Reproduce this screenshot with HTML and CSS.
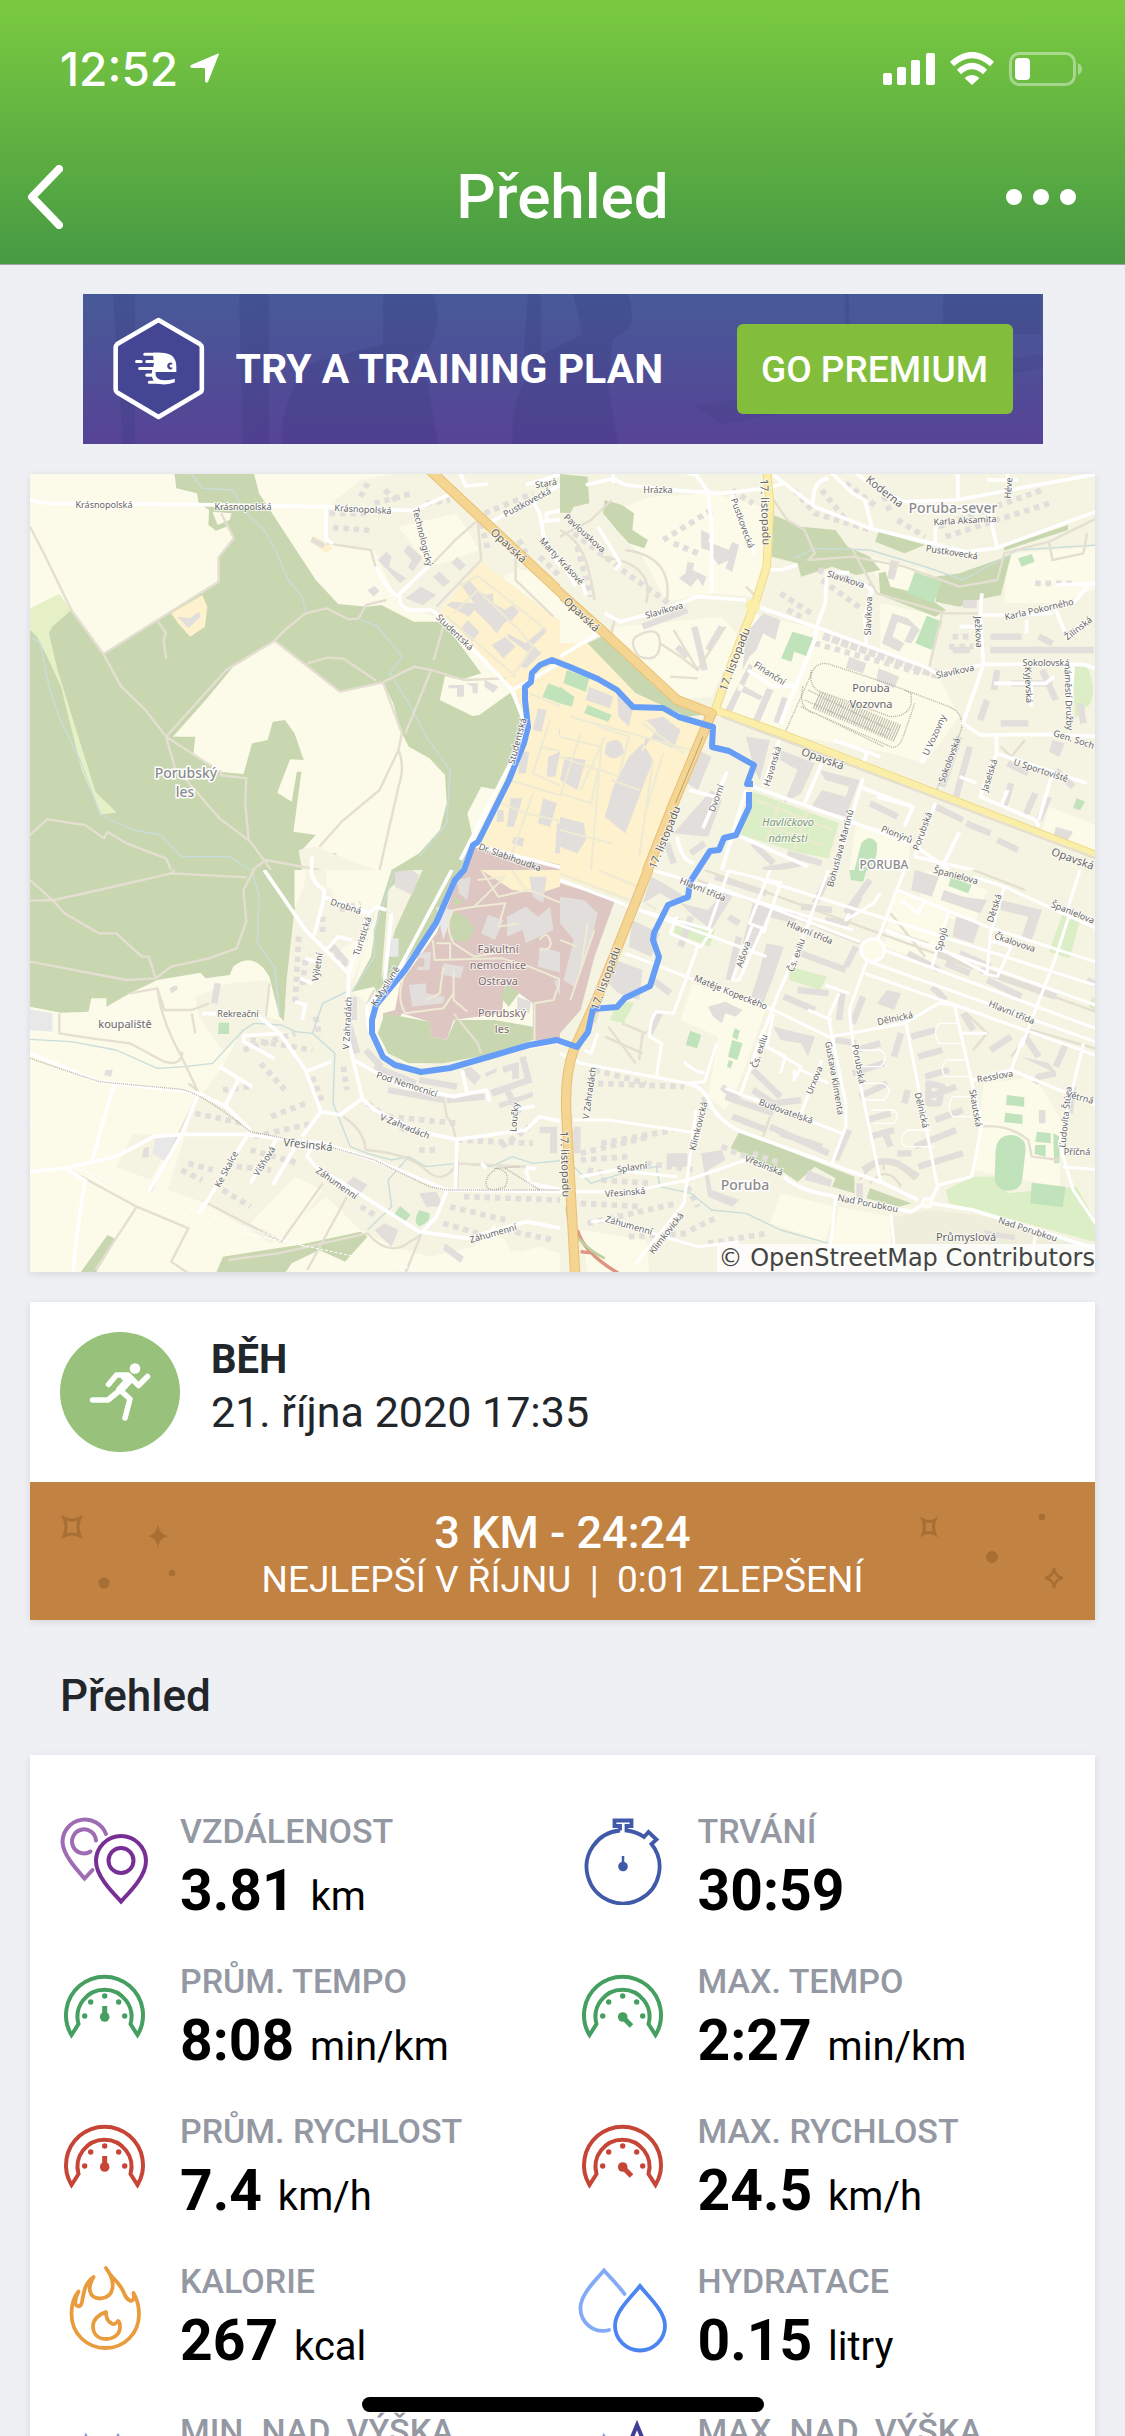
FILE: index.html
```html
<!DOCTYPE html>
<html lang="cs">

<head>
  <meta charset="UTF-8">
  <meta name="viewport" content="width=device-width, initial-scale=1">
  <title>Přehled</title>
  <link rel="stylesheet" href="styles.css">
</head>

<body>
  <!-- shared icons -->
  <svg class="defs" aria-hidden="true">
    <symbol id="gauge" viewBox="0 0 90 90">
      <path d="M11.500 70A38.500 38.500 0 1 1 77.500 70L70.500 59A27 27 0 1 0 18.500 59Z" fill="none" stroke="currentColor" stroke-width="4" />
      <g fill="currentColor">
        <circle cx="24.700" cy="51" r="2.700" />
        <circle cx="30.700" cy="37" r="2.700" />
        <circle cx="44.700" cy="31" r="2.700" />
        <circle cx="58.700" cy="37" r="2.700" />
        <circle cx="64.700" cy="51" r="2.700" />
        <circle cx="44.700" cy="52" r="4.800" />
      </g>
    </symbol>
  </svg>

  <div class="app">
    <header class="header">
      <div class="status-bar">
        <span class="time">12:52</span>
        <svg class="location" viewBox="0 0 32 32"><path d="M31 1L20 29Q18 31 17 28V16Q17 15 16 15H4Q1 14 3 12L29 1Q31 0 31 1Z" fill="#fff" /></svg>
        <svg class="signal" viewBox="0 0 52 34" fill="#fff">
          <rect x="0" y="21" width="9" height="12" rx="2" />
          <rect x="14" y="15" width="9" height="18" rx="2" />
          <rect x="28" y="8" width="9" height="25" rx="2" />
          <rect x="43" y="1" width="9" height="32" rx="2" />
        </svg>
        <svg class="wifi" viewBox="0 0 46 34" fill="none" stroke="#fff" stroke-width="6">
          <path d="M3 12Q23 -6 43 12" />
          <path d="M10 20Q23 8 36 20" />
          <path d="M23 33L15.500 26Q23 20 30.500 26Z" fill="#fff" stroke="none" />
        </svg>
        <svg class="battery" viewBox="0 0 74 36">
          <rect x="1.500" y="2.500" width="64" height="31" rx="9" fill="none" stroke="#fff" stroke-opacity=".4" stroke-width="3" />
          <rect x="6" y="7" width="15" height="22" rx="4" fill="#fff" />
          <path d="M69 12Q73 14 73 18T69 24Z" fill="#fff" fill-opacity=".4" />
        </svg>
      </div>
      <nav class="nav">
        <button class="nav-button" type="button" aria-label="Zpět">
          <svg viewBox="0 0 36 64"><path d="M32 4L5 32L32 60" fill="none" stroke="#fff" stroke-width="8" stroke-linecap="round" stroke-linejoin="round" /></svg>
        </button>
        <h1>Přehled</h1>
        <button class="nav-button more" type="button" aria-label="Více">
          <svg viewBox="0 0 72 18" fill="#fff"><circle cx="9" cy="9" r="8" /><circle cx="36" cy="9" r="8" /><circle cx="63" cy="9" r="8" /></svg>
        </button>
      </nav>
    </header>

    <main class="content">
      <section class="banner">
        <svg class="banner-art" viewBox="0 0 960 150" preserveAspectRatio="xMidYMid slice" aria-hidden="true">
          <g fill="#2f3575" opacity=".2">
            <path d="M300 0H350Q358 20 352 40L345 56L330 62L345 90L355 150H200Q195 110 225 70L300 50Z" />
            <path d="M490 0H545Q552 20 546 34L530 45L525 90L535 150H430Q425 100 460 60L500 40Z" />
            <path d="M30 0H52V150H40ZM156 0H186V150H160ZM445 0H458V70H440ZM762 0H766V70H762ZM860 0H958V40H860Z" />
            <path d="M610 112L960 60V74L640 130Z" opacity=".6" />
          </g>
        </svg>
        <svg class="banner-logo" viewBox="14 8 90 102">
          <path d="M58.500 11L99 34.500Q101 36 101 38V79Q101 81 99 82L58.500 106L18 82Q16.500 81 16.500 79V38Q16.500 36 18 34.500Z" fill="#444593" stroke="#fff" stroke-width="4.500" stroke-linejoin="round" />
          <g stroke="#fff" stroke-width="3" stroke-linecap="round">
            <path d="M45 44.500H60M37 51.700H41.500M47 51.700H58M40 58.500H58M47 65H52M49.500 72H60" />
          </g>
          <path d="M53 43H61Q76 43 76 57V62H55.500Q55 70 64 70Q70 70 74.500 68.500V72Q69 74.500 62 74Q51 74 52 62L54 54Z" fill="#fff" />
          <path d="M72 53A3.400 3.400 0 1 0 72 59V57A1.500 1.500 0 1 1 72 55Z" fill="#444593" />
        </svg>
        <span class="banner-text">TRY A TRAINING PLAN</span>
        <button class="premium" type="button">GO PREMIUM</button>
      </section>

      <section class="map card">
        <svg class="map-canvas" viewBox="30 474 1065 798" preserveAspectRatio="xMidYMid slice">
          <rect x="30" y="470" width="1070" height="810" fill="#fcfae8" />

          <!-- north-west tile -->
          <svg x="30" y="470" width="540" height="400" viewBox="0 0 1568 1200" preserveAspectRatio="none">
            <path class="forest" d="M418 0L425 55L485 70L490 100L520 120L518 165L540 182L575 168L592 205L548 262L550 330L213 552L120 420L0 480V1200H1250L1285 1100L1270 1030L1310 950L1360 960L1400 870L1432 750L1395 668L1305 735L1285 738L1190 690L1205 618L1250 630L1310 610L1200 455L1115 455L1020 405L980 410L895 402L830 330L760 220L665 70L648 0Z" />
            <path class="field" d="M710 515L800 585L900 665L1025 637L1055 700L1075 780L1100 830L1160 865L1205 915L1210 1000L1190 1080L1130 1150L1050 1200H820L785 1145L830 1095L765 1085L788 905H775L760 995L718 968L755 868L795 870L768 790L740 750L705 755L690 810L645 820L620 912L550 905L475 850L480 800H415L510 690L590 590ZM530 125L585 130L580 150L545 165Z" />
            <path class="forest" d="M858 1150H890L880 1195H855ZM840 575L910 566L1010 635L900 665L800 585Z" />
            <path class="meadow" d="M0 415L85 372L120 420L65 470L55 490L80 600L190 965L252 1028L205 1033L150 900L90 650L50 560L20 500L0 480Z" />
            <path class="town" d="M960 30L1120 0H1568V390L1470 300L1410 300L1180 440L1070 400L1000 240L862 215V110ZM780 1140L830 1130L1000 1200H790Z" />
            <path class="field" d="M1070 170L1240 130L1305 240L1230 270L1160 290ZM1410 290L1568 400V480L1410 340Z" />
            <path class="campus" d="M1310 275L1510 430L1568 470V1200L1290 1130L1440 770L1400 650L1180 440ZM410 430L500 375L515 410L508 470L465 500L430 460ZM825 195L880 235L862 250L812 215Z" />
            <path class="hospital" d="M1290 1130L1568 1190V1200H1255Z" />
            <path class="water" d="M460 0L500 55L590 60L620 120L680 180L710 235L750 330L790 380L800 425M960 450L1010 470L1080 560L1045 610L1100 700L1150 800L1220 900L1210 1060L1130 1160M0 500L30 520L55 650L85 740L145 870L205 1035L300 1080L380 1095L440 1160L580 1160L640 1200" />
            <path class="pitch" d="M1505 640L1568 665V712L1488 680ZM1555 605H1568V648L1548 640Z" />
            <path class="building" d="M1010 270L1035 245L1050 262L1042 290L1092 325L1075 340ZM1098 225L1140 262L1112 305L1098 292L1108 270L1085 245ZM980 360L1000 348L1015 362L998 380ZM820 200L858 222L850 235L815 215ZM428 440L465 445L490 425L495 440L460 475Z" />
            <path class="building" d="M1090 385L1135 350L1180 375L1140 405ZM1170 320L1190 305L1220 335L1200 350ZM1225 280L1240 260L1265 285L1250 303Z" />
            <path class="building" d="M1255 350L1275 330L1300 360L1325 375L1345 370L1345 400L1380 420L1400 405L1420 425L1400 450L1380 455L1355 490L1330 460L1290 420L1275 440L1210 405L1225 395L1290 400ZM1340 525L1380 500L1410 530L1375 565ZM1385 490L1440 520L1490 475L1500 485L1460 525L1485 550L1440 595L1425 590L1450 550L1390 505ZM1250 480L1270 450L1305 485L1285 515Z" />
            <path class="building" d="M1215 645H1260V680H1240V655H1215ZM1265 640H1300V670H1285V650ZM1320 630L1360 650L1345 668L1320 650Z" />
            <path class="building" d="M1475 715L1500 720L1485 785L1460 780ZM1425 845H1450L1440 910H1418ZM1505 860L1540 845L1525 920H1500ZM1540 760H1558V795H1535ZM1395 985H1430L1405 1070H1385ZM1490 985L1530 1000L1510 1070L1475 1060ZM1405 1100L1435 1105L1430 1130L1400 1120ZM1550 940H1568V1010H1545ZM1530 1060H1568V1150H1525ZM1358 1020H1375V1055H1355Z" />
            <path class="house" d="M870 130L990 130M880 172L990 182M1000 100L1110 70M1030 60L1070 95M1150 100L1220 90M1320 130L1460 70M1310 160L1330 240M960 80L980 40M1420 210L1440 250M1480 260L1550 330" />
            <path class="path" d="M0 170L45 260L120 420L213 552L265 650L335 720L395 800L560 910M213 552L548 335V262L592 205L555 130M372 455L395 490L388 510L395 565M395 800L570 600L710 512L740 480L800 430L860 415L925 448L955 445L975 405L1035 390M710 512L900 665L1025 637L1115 590L1165 600L1260 630L1380 625M805 580L865 563L910 566L1005 632M1025 637L1080 790L1070 840L1015 960L905 1055L840 1130M1165 600L1090 790M1070 840Q1090 890 1070 950L1015 1200M1200 470L1172 570M395 800L420 890L550 1045L640 1115L700 1200M550 915L628 925L625 1000L635 1110M0 1095L50 1048L160 1065L215 1105L225 1085L280 1120L395 1165L410 1200M645 1200L685 1170L840 1200M862 220L990 240L1003 290M1295 155L1235 210L1165 285M1300 150L1310 270L1180 410M1410 250V330L1520 440" />
            <path class="path light" d="M1240 350L1300 318L1500 480M1230 430L1300 360L1420 480L1460 530L1400 620M1210 440L1300 520L1410 620M1450 670L1568 720M1510 750L1460 910L1568 960M1390 930L1568 985M1480 830L1568 850M1460 970L1400 1150M1370 1000L1440 1030L1568 1060" />
            <path class="road" d="M0 90L50 100L490 104L860 110L1110 122L1222 72M860 112V208L880 222M1005 290Q1030 350 1068 380M1160 285L1075 370Q1065 415 1110 420L1165 420Q1200 440 1400 660L1440 770L1400 870L1250 1170M1400 660L1455 630L1568 560M1340 155L1568 30M1460 90L1480 130L1495 220L1568 330M1250 12L1265 48L1330 42M1485 155L1568 145M1500 150V130L1540 122M1580 0L1440 45M818 1160V1200M1290 1125L1568 1200" />
            <path class="primary-case" d="M1150 -10L1580 405" />
            <path class="primary" d="M1150 -10L1580 405" />
          </svg>

          <!-- north-east tile -->
          <svg x="560" y="470" width="540" height="400" viewBox="0 0 1568 1200" preserveAspectRatio="none">
            <rect class="town" width="1568" height="1200" />
            <path class="field" d="M190 110L260 80L440 70L590 110L600 300L560 380L440 370L310 395L240 260L180 200ZM0 390L110 490L0 560ZM160 470L470 440L520 500L440 680L330 690L150 490ZM560 430L720 470L1100 620L1160 740L1060 880L960 850L640 790L460 740ZM900 260L1060 300L1110 420L960 390L920 320ZM1300 250L1568 230V350L1450 400L1290 400ZM930 400L1110 440L1070 590L930 540ZM860 1060L1020 1100L1010 1200H840ZM1420 1010L1568 1070V1150L1400 1080Z" />
            <path class="campus" d="M0 520L80 520L380 760L430 780L245 1200H0Z" />
            <path class="forest" d="M0 12L80 20L85 100L40 110L30 130L0 128ZM130 90L180 105L215 130L210 180L255 210L245 235L200 220L165 180L125 130ZM620 135L700 170L800 180L835 230L900 260L930 300L860 315L790 290L700 320L690 280L615 260ZM925 185L1060 225L1000 250L915 215ZM1290 230L1475 165V180L1290 242ZM945 305L960 350L1060 375L1120 420L1090 440L930 375L925 310ZM1060 325L1160 310L1310 255L1280 375L1220 388L1160 410L1090 395L1100 340ZM80 520L130 495L410 735L370 740L220 670Z" />
            <path class="pitch" d="M1030 305L1108 335L1085 400L1008 370ZM1330 265L1370 252L1378 275L1340 290ZM1065 437L1110 455L1080 540L1032 520ZM675 485L735 503L715 558L680 545L672 575L642 565ZM20 600L85 625L75 665L10 640ZM0 650L42 680L35 710L0 700ZM80 705L150 735L140 755L70 730ZM875 1120Q900 1090 920 1120Q925 1160 900 1200H855ZM1500 985L1525 995L1510 1020L1490 1015Z" />
            <path class="park" d="M560 965L810 1060L780 1165L700 1150L525 1095ZM1490 590H1530Q1560 650 1540 700L1495 745Z" />
            <path class="path light" d="M570 990L790 1080M590 1060L770 1130M640 990L600 1110M720 1020L680 1140" />
            <path class="building" d="M410 180L440 195L430 215L490 240L500 215L520 225L500 305L480 295L490 270L460 285L430 240L410 235ZM370 275L390 280L385 300L425 320L415 350L400 325L380 350L345 325L365 310ZM590 430L640 450L625 510L590 490L570 540L550 560L530 600L540 490ZM550 580L480 720L500 725L560 590ZM600 655L620 660L580 755L560 750ZM645 680L660 685L635 760L620 755ZM520 640L590 680L580 690L515 660ZM840 560L890 580L880 610L830 595ZM925 595L985 620L970 655L918 632ZM965 430L1010 445L1045 480L1020 520L1000 515L1020 470L980 455L965 500L1000 520L985 545L935 520ZM960 270L985 275L970 330L950 325Z" />
            <path class="building" d="M85 650L155 680L145 715L75 690ZM135 820Q180 790 185 850Q150 880 130 850ZM165 660L215 700L200 770L170 740ZM250 750L300 740L350 780L330 835L250 800L235 850L280 780ZM240 820L270 870L190 1090L130 1040L155 950L200 860ZM15 860L75 870L50 960L0 930ZM0 1040L70 1060L75 1110L50 1150L0 1130ZM380 830L440 860L400 960L370 940L395 880ZM440 960L470 990L430 1100L330 1090ZM540 800L610 810L580 930L565 900ZM640 840L740 880L700 970L650 1000L690 900L640 870ZM755 900L870 930L830 1040L730 1010L760 960L830 980L840 950L770 930ZM1440 1070L1490 1085L1470 1120L1430 1110ZM1430 810L1465 820L1450 860L1420 845ZM1170 390H1210V415H1170Z" />
            <path class="house" d="M680 60L740 130L900 180M760 60L830 150M980 150L1060 200M1100 170L1400 60M1120 200L1420 100M830 40L920 110M930 50L960 130M640 370L730 430M660 420L700 440M750 300L900 350M760 330L880 420M740 520L1050 610M500 60L560 100M330 220L400 250M180 300L330 410M1140 500L1200 500M1130 530L1200 530M40 190L170 290M50 230L90 380M300 210L440 120M1380 340H1490" />
            <path class="block" d="M1250 500H1340M1250 540H1550M1390 500L1430 520M1140 540H1190M240 470L370 420M340 530L370 560M390 470L420 600M430 540L470 470M1270 600L1260 660M1240 690L1220 750M1310 640H1430M1280 760H1360M1400 600L1440 690M1160 800L1110 950M1190 830L1150 980M1310 940L1290 1010M1380 970L1350 1040M1180 1060L1250 1090M1270 1110L1330 1140M1090 1010L1170 1050M560 1120L620 1180M660 1150L760 1180M590 1200L700 1180M1440 900L1490 950M1420 980L1390 1050M1510 700L1520 760M1300 880L1360 910M310 1120L330 1180M380 1150L420 1120M900 1000L980 1040" />
            <path class="terrace" d="M765 495L1100 615" />
            <path class="water" d="M680 265L740 235L900 240L1060 290L1170 330L1330 240L1560 225" />
            <path class="path light" d="M0 860L110 900L90 1000L0 970M110 770L200 800L170 920L90 890M240 760L360 850M130 800L60 960M30 740L380 840M300 850L250 1020M150 930L230 960M0 800L120 830L90 1200M0 1080L150 1120M60 790L0 980M270 870L230 1160" />
            <path class="path" d="M620 90L660 150L710 180L740 250L720 270L850 260L1000 290L1160 350L1270 330L1290 250L1420 215L1568 140M850 240L920 370L1120 430H1220M1420 215L1430 270L1520 250L1530 190M150 90L90 150L0 200M0 180Q60 210 80 290T100 390M190 240Q330 260 310 395M120 260Q280 280 250 400M220 500Q290 460 290 520T230 560Q200 520 220 500M330 480L400 600L480 470M290 520L350 560L400 600M320 620L400 625M150 490L160 440M1110 430L1070 600M540 350L570 380M1280 830L1310 860L1350 810" />
            <path class="rail" d="M650 795L735 600Q750 575 780 582L950 640L1130 710Q1175 730 1165 780L1090 970M730 600Q720 660 770 670L960 740Q1010 740 1020 700V670L1000 660M705 650Q690 720 740 730L960 830Q985 840 1000 790L1030 700M720 660L960 780M710 690L950 800M700 710L940 830" />
            <path class="tracks" d="M745 690L980 790" />
            <path class="road" d="M75 45L155 25L190 45L350 62L470 70L600 55L650 40M155 0V40M340 0L395 15L430 65L440 170V370M620 15L740 110L900 175L1180 245L1265 235L1568 120M735 110Q730 30 780 25M780 0L850 70L885 90L905 170M850 0Q900 50 1000 95L1150 90L1568 10M1155 0V90M1245 120L1270 235M1090 170V220M1240 30H1330M1300 0V60M500 75L510 130L565 250M600 298L640 300L690 285M110 170L175 280L160 300M20 300L45 350M65 340L75 375M130 430L175 455L300 420L400 380L540 390M575 410L740 470L1060 590L1110 620M775 310L770 400L745 470L740 510L640 760M880 340L905 360L885 440L890 530M0 560L120 485M770 308H840M545 600L620 650L690 645M1110 610L1200 590L1230 583H1520L1568 600M1225 370L1220 440L1230 583L1170 760L1220 795L1430 793L1568 800M1215 435H1310L1430 430M1355 450V490M1440 420L1470 500L1530 450M1160 470H1210M1540 340L1490 400M1260 640H1410L1435 620M1440 345L1568 340M1368 640V710M1267 795L1268 850L1530 940M1268 850L1220 980L1380 1050L1390 1070M1430 910L1390 1050M1210 940L1160 920M1110 750L1050 880M1300 960L1280 1010M795 810L930 860M890 850L880 885M640 800L590 950M560 950L1020 1120L1130 1200M540 960L470 1200M760 880L710 1000M880 925L800 1200M870 950L1025 1010L1000 1070M920 980L1025 1010M1090 1000L1030 1160M1030 1160L1200 1200M375 960L450 980M485 905L415 1075M340 1100Q350 1170 390 1180M525 1100L720 1190M1160 1085L1110 1190M1490 590L1480 720" />
            <path class="secondary-case" d="M600 0L610 100L600 290L570 390L520 520L450 720L640 790L1568 1160" />
            <path class="secondary" d="M600 0L610 100L600 290L570 390L520 520L450 720L640 790L1568 1160" />
            <circle class="secondary" cx="560" cy="408" r="11" />
            <path class="path" d="M470 740L1568 1170" />
            <path class="primary-case" d="M-10 360L120 480L340 690L440 730L330 1000L250 1210" />
            <path class="primary" d="M-10 360L120 480L340 690L440 730L330 1000L250 1210" />
            <path class="median" d="M415 800L335 1000" />
          </svg>

          <!-- south-west tile -->
          <svg x="30" y="870" width="540" height="410" viewBox="0 0 1568 1230" preserveAspectRatio="none">
            <path class="forest" d="M0 0H768V110L795 125L780 230L745 360L738 455L725 440L695 320Q650 240 590 290L580 315L510 325L495 308L370 330L290 370L222 410V385H178L170 425L90 428L0 410ZM1050 0H1250L1170 170L1010 380L1000 350L935 365L990 260L1010 130ZM225 1095L250 1108L190 1210H145ZM560 1160L780 1125L960 1085L980 1100L915 1175L840 1140L760 1180L740 1210H540Z" />
            <path class="town" d="M768 120L790 60L810 0L860 50L1005 120L935 365L980 400L985 500L1100 590L1568 520V1160L1480 1130L1400 1150L1350 1060L1290 1130L1160 1160L1060 1130L960 1080L860 980L700 1120L510 1000L400 960L480 700L560 590L620 470L690 440L738 455L745 330ZM800 0H860V70L800 100ZM480 380L580 340L690 330L680 440L560 540L490 440ZM300 790L420 800L350 930L250 890ZM1040 60L1100 0H1140L1060 180L1020 330Z" />
            <path class="field" d="M868 0H1005L1010 90L970 140L880 80ZM770 920L850 960L740 1110L640 1060ZM1290 1130L1568 1160V1210H1200ZM900 240L990 180L935 340Z" />
            <path class="hospital" d="M1255 0L1568 0V520L1460 510V400L1380 340L1370 430L1230 450L1210 510L1165 500L1160 455L1080 430L1050 495L1025 480V430L1060 420L1075 340L1180 190Z" />
            <path class="forest" d="M1215 120Q1270 130 1290 180L1270 215L1225 210ZM1230 80L1260 95L1230 110ZM1385 340L1420 370L1390 410L1365 380ZM1030 430L1160 455L1165 500L1210 510L1235 450L1350 450L1460 470V510L1350 550L1200 580L1100 580L1040 550L1010 490Z" />
            <path class="campus" d="M1310 0H1568V40L1480 70L1400 60Z" />
            <path class="pitch" d="M548 458H578V492H546ZM1075 1008L1105 1035L1085 1060L1052 1040ZM1130 1020L1160 1030Q1165 1055 1130 1070Q1110 1055 1130 1020Z" />
            <path class="building" d="M1240 30L1280 20L1270 90L1245 70ZM1060 5L1110 0L1130 15L1110 75L1060 50ZM1330 135L1375 150L1350 210L1310 190ZM1385 140L1440 110L1475 140L1510 110L1520 180L1440 220L1430 180L1385 200ZM1480 230L1550 250L1545 310L1475 290ZM1200 280L1260 290L1250 325L1200 315ZM1100 345L1150 340V370L1205 380L1200 400L1110 410ZM1120 250L1165 245L1160 300H1125V290H1145V265H1120ZM1415 380L1455 395L1450 430L1415 420ZM1450 20H1500L1490 100L1460 80ZM1335 660L1450 620L1460 635L1345 680ZM1360 700L1460 665V680L1365 715ZM1280 590L1310 620L1290 645L1250 600ZM1320 610L1355 595V605L1325 620ZM1372 590L1420 575V625L1400 628V600L1375 610ZM920 940L940 920L980 945L960 970ZM1130 970L1180 965L1200 1010L1150 1010ZM1000 1080L1030 1060L1070 1080L1050 1130ZM220 600L240 600L235 620L215 615ZM405 355L425 345L430 358L410 370ZM1205 1120L1260 1160L1250 1178L1200 1140ZM330 835L345 830V860L325 865ZM1480 770H1530V850H1510V790H1480Z" />
            <path class="lot" d="M365 800H430L400 880L355 850ZM0 418L65 430V485L0 480ZM1180 110L1230 120L1200 210ZM1040 205H1070V260H1040Z" />
            <path class="house" d="M780 200L770 400M800 270L790 360M850 140V200M870 230L920 290M900 120L960 100M620 540L770 490M640 510L820 540M670 580L740 660M560 660L640 650M480 730L620 760M700 740L800 700M650 800L820 760M640 840L780 880M600 890L700 900M560 960L640 1010M440 900L500 930M460 880L530 900M830 440L840 500M820 620L850 700M980 700L1100 790M1040 740L1240 760M1130 840H1180M1240 810L1460 820M1260 980L1540 990M1220 1010L1380 1050M1200 1060L1300 1090M1380 1080L1520 1110M960 1010L1010 1040M1370 830L1450 770M910 590L920 660" />
            <path class="block" d="M940 380V450M925 460L950 550M975 540L1020 590M1000 590L1120 640M1040 660L1200 690M1130 630L1240 650M1210 690L1320 680M1380 650L1420 730M1430 560L1450 640M545 340L535 400M870 220L920 280M1530 330L1550 380" />
            <path class="water" d="M0 508L120 515L250 540L370 595L450 590L530 580L620 480L650 460L730 465L770 485L820 490L885 550L880 700L930 830L980 850L1050 870L1100 860L1150 890L1240 880L1340 890L1400 860L1460 880L1560 870M645 0L665 80L660 220L710 290L725 440M820 490L850 400L920 365M1100 860L1040 930L1050 1010L980 1080M1060 0L1000 180L1000 260L935 365" />
            <path class="path" d="M0 30L65 90L100 130L200 190H250L325 260H345L365 325L410 290L520 265L600 235L628 155L620 60L650 0M0 92L70 90L200 60L410 10L420 0M410 10L630 22M0 275L280 330L365 325M290 370L370 355L390 420H470L520 400M370 355Q380 450 440 560L490 670M85 430V490L180 505L290 520L390 575Q440 590 442 545M470 430L480 490M695 340L685 440M490 670L350 965M490 665L460 640M245 640L180 870M310 1010L190 1200M105 895L310 1010L460 1075L410 1175L460 1210M515 1000L730 1115L850 940M920 980L805 1200M575 1170L720 1150L980 1090Q1030 1150 1080 1130L1135 1095L1090 1210M1200 680L1210 740Q1250 780 1240 960M910 740Q970 780 975 840Q1100 850 1150 900T1240 880L1440 890M1230 430L1300 520L1310 550M980 400L1000 360" />
            <path class="path light" d="M1300 30L1380 20L1290 110L1230 120Q1200 160 1230 220L1290 260L1400 240M1290 110L1380 100L1360 170L1420 160M1170 210L1175 270L1370 265L1450 290L1568 340M1180 220H1220V270M1230 300V390L1270 425M1090 310Q1060 380 1090 430L1200 415L1230 370M1200 290L1190 370L1150 390M1310 0L1360 80L1450 60L1568 110M1400 0L1440 60M1465 510V400L1520 390L1568 250M1480 210Q1500 180 1510 210T1480 240" />
            <path class="power" d="M0 770L230 960L580 1080L900 1150L1180 1210M120 890L500 1030L800 1130" />
            <path class="road" d="M680 0L800 180L925 310L922 500L965 685L1000 720L1130 785L1240 808L1440 780L1480 740L1568 760M815 0Q820 40 855 60L850 100L825 195M850 80L985 130L1005 110L1035 120M985 130L925 310M860 240L895 200L935 210M1050 130L1030 330M500 430L540 432M660 435L725 490L800 600L845 725L900 735L965 685M730 490L620 497V515L710 565M800 605L875 575M845 725L790 800M550 590L645 650M605 630L565 710M940 570L1080 650L1230 680L1325 660L1335 695M1255 600L1268 665M1225 0L1070 300L980 410Q970 510 1060 580M0 905L100 895L250 860L360 800L440 793H620L850 820L1000 870L1210 960L1568 965M0 550L200 635L420 660L490 670L570 710L640 780M245 640L180 870M160 930L135 1100L125 1210M105 895L165 935M490 670L440 793L345 965M640 780L510 1000L490 1030M720 800L640 940M770 830L705 945M820 820L805 860L830 890L970 980L1130 1085L1270 1105L1440 1055L1545 1075M1210 965L1180 1040L1140 1085M1240 808L1235 960M1310 880L1325 895M1440 895H1470M1440 900L1450 940L1568 965M1400 720L1465 708M800 265L830 275M785 325L820 340M770 395L800 405L790 450" />
            <path class="rail" d="M0 565L200 635L440 658Q500 670 640 785L740 805L870 830L1000 870L1160 950L1210 960H1568M1350 900Q1320 920 1325 945T1380 950Q1400 900 1350 895L1425 890M1380 895L1480 960" />
          </svg>

          <!-- south-east tile -->
          <svg x="560" y="870" width="540" height="410" viewBox="0 0 1568 1230" preserveAspectRatio="none">
            <rect class="town" width="1568" height="1230" />
            <path class="campus" d="M0 0H260L190 90L0 20Z" />
            <path class="hospital" d="M0 40L160 90L100 260L60 420L0 490Z" />
            <path class="building" d="M0 80L70 90L110 130L90 210L40 350L10 330L40 210L0 160Z" />
            <path class="field" d="M385 340L600 410L520 640L480 720L430 680L460 500L350 450ZM970 60L1130 120L1080 280L940 230ZM1230 640L1380 620L1460 760L1450 950L1200 900ZM640 970L800 1010L770 1115L610 1060ZM810 1010L960 1040L975 1150L770 1200ZM60 1080L250 1110L260 1210H80ZM1060 0L1240 60L1200 170L1040 110Z" />
            <path class="industry" d="M970 1040L1080 1020L1240 1040L1568 1130V1210H970Z" />
            <path class="meadow-bright" d="M1120 960L1200 920L1260 920L1300 970L1500 950L1568 1080V1120L1320 1050L1130 1000ZM1460 130L1510 150L1480 265L1420 245ZM170 390L215 400L185 460L145 450ZM670 290L775 320L755 360L665 330ZM340 145L450 180L435 230L330 190ZM1545 380L1568 390V430L1535 410Z" />
            <path class="forest" d="M520 785L855 920V970L790 950L800 925L740 890L690 935L640 900L495 835ZM900 955L1020 1000L985 1010L890 985Z" />
            <path class="pitch" d="M1265 840Q1270 795 1310 795Q1355 800 1352 840L1342 930Q1335 965 1295 962Q1260 955 1262 920ZM1370 938L1468 950L1460 1012L1365 1000ZM1298 675L1348 682V710L1295 705ZM1293 728L1343 735V762L1290 757ZM1385 785L1425 790V820L1380 815ZM1380 825H1410V860L1378 852ZM1432 790L1452 800L1450 880H1435ZM378 482L410 495L398 535L365 525ZM500 510L530 520L515 570L488 560ZM508 475L522 482L515 510L500 500ZM490 570L503 575L495 595L485 590ZM1135 20L1195 45L1185 70L1128 48ZM840 0H890L880 35L845 30Z" />
            <path class="building" d="M265 20L300 40L380 90L340 100L290 70L240 100ZM350 100L430 120L480 60L500 80L440 180L390 140ZM210 150L290 190L265 260L200 230ZM430 410L480 395L530 420L510 440L480 430L470 460L445 440ZM560 100L690 130L680 160L600 140L560 240L530 220ZM600 220L650 230L620 320L590 400L555 380L580 300ZM310 850H370V890H310ZM410 850L470 840L480 870L430 900L440 960L520 990L500 1010L430 980ZM1030 0L1100 20L1080 80L1020 60ZM1115 60L1170 80L1240 90L1220 130L1105 90ZM1280 90L1400 120L1370 210L1340 200L1360 140L1280 120ZM1150 140L1220 160L1200 220L1140 200ZM160 270L240 300L230 390L170 370L140 340ZM620 470L740 500L720 560L700 520L640 510ZM1340 560L1440 610L1420 580ZM720 900L790 930L785 950L710 930ZM1230 1080L1320 1095V1110L1240 1100ZM950 360L990 370L970 420L920 400Z" />
            <path class="block" d="M480 680L620 730M500 740L600 780M610 770L780 850M640 790L760 830M560 600L640 680M560 660L620 700L700 690M650 380L740 420M690 360L780 370M700 250L830 300M820 370L810 450M880 380L850 460M770 150L830 160L870 80M740 100L780 20M900 30L830 130M470 650L520 690M860 540L930 520M850 610L940 580M870 680L950 640M890 750L960 730M900 800L970 780M1020 500L1090 480M1040 560L1110 540M1060 620L1130 600M1070 680L1150 650M1090 750L1170 720M1030 830L1150 780M1040 890L1170 850M1170 430L1200 480M1120 390L1080 350M1250 540L1310 500M1350 500L1390 560M1380 640L1390 620L1440 610M1220 300L1440 380M1240 330L1340 380M870 940L870 990M880 900Q930 860 980 880L1040 920M970 560L990 490M1000 700L1010 660M940 780L960 830M980 850H1020M1070 640L1110 650L1100 700H1070ZM790 120L700 110M800 510L860 520M840 780L800 870M1160 250L1250 290M1470 520L1440 590M1490 650L1480 730M1400 720V760M1530 330L1568 350M1010 250L1100 300M1120 280L1190 310M1090 250L1200 290M50 770V850M30 780V840M860 230L830 290M450 20L600 70M490 140L520 160M520 200L490 330M380 140L350 230M220 110L250 20M270 330L320 370M290 430L260 490" />
            <path class="house" d="M100 600L250 640M110 640L360 650M60 850L260 800M120 820L330 780M60 870L200 860M80 900L130 910M250 880L390 900M60 1000L240 1010M80 1060L340 1000M200 1100L380 1090M380 1080L460 1040M370 950L400 1010M120 930L260 940M430 1120L600 1090M560 850L640 880M470 830L540 860M420 680V720" />
            <path class="water" d="M40 890L90 940L180 910L280 890L290 950L380 970L440 1020L540 1030L640 1080L780 1120" />
            <path class="path light" d="M0 10L200 90M110 0L250 60M400 40L560 90M250 100L280 120M80 160L60 300M100 180L30 390M0 210L50 230" />
            <path class="path" d="M130 500L240 550M140 470L220 580M180 460L250 490M240 490L230 570M190 150L100 460M420 0L1568 430M400 30L870 220M960 130L1060 260M950 180L1070 220M610 740L590 800M1220 770Q1300 760 1360 810L1370 860L1450 870M1180 430L1240 490L1200 540M870 930Q940 830 1030 930M900 940Q950 880 990 950M940 900V870M960 1030L970 1180M1200 0L1350 60M1310 560L1370 480L1568 540" />
            <path class="road thin" d="M480 0L560 20L1568 350M270 0L850 180M430 40L870 215M0 30L230 120L600 260M610 0L550 160L600 180M560 160L500 330H520L590 170M640 40L590 190M600 30L645 40M720 160L780 0M730 140L630 380L525 670M230 120L440 180L410 230L320 190L340 140M490 0L430 180M400 230L330 430L280 425Q260 450 260 500L295 520L280 620M190 250L620 420L780 500L845 490L920 475M620 430L600 530L655 560L640 610M600 530L700 590L680 630L680 600M700 600L780 640M810 370L780 440L790 500L830 700V770L790 880M720 420L790 450M770 345L840 370M1000 0L930 190L885 290L840 420L855 560L930 930M885 310L1230 435M885 270L1568 520M940 240L1568 480M945 180L1568 410M980 60L1240 170L1568 280M990 90L1040 130L1060 90M1130 120L1080 290M1130 250L1240 310L1250 190L1290 50L1568 180M1245 210L1310 230L1270 320L1230 310M1480 130L1440 260L1340 530M1510 0L1470 130M1290 50L1200 20M1000 460L920 475M1000 460L1100 400L1145 405L1225 770L1195 920L1100 945M1005 460L1095 945M1145 405L1568 560M1165 490L1240 490M1200 630L1310 600L1568 710M1310 600L1345 500M1520 520L1450 820L1490 960L1568 1080M1460 890L1568 900M480 655L820 790M525 670L590 480M700 730L760 570M0 550L60 580L370 640L420 635L455 520M360 575Q380 600 420 610M70 540L90 550L110 490M40 750H140L340 780L400 790M60 920L160 900L340 920M0 965H200L370 930L540 870M395 720L360 1000L220 1180M90 1055L140 1050L270 1090L400 1130L520 1115M800 980L790 1090L770 1200M960 1030L975 1180M1380 1100L1370 1160M840 130L830 150L910 100L930 70" />
            <path class="road" d="M370 640Q420 650 440 710Q480 770 540 790L940 940L1040 990M650 920Q690 960 780 975L1020 1025L1080 985L1100 945M1080 1000L1200 1020L1568 1140" />
            <path class="estate" d="M860 540H930Q960 560 930 590H870M870 640H940Q970 660 940 690H880M900 720H970Q990 740 970 760H910M1160 460H1100Q1080 490 1100 520H1170M1180 570H1120Q1100 600 1120 620H1190M1190 680H1140Q1120 710 1140 740H1210M1080 780H1010Q980 800 1000 830H1090" />
            <circle class="roundabout" cx="908" cy="240" r="34" />
            <circle class="roundabout" cx="1066" cy="998" r="13" />
            <path d="M50 1080Q70 1150 170 1210M60 1145L100 1150" fill="none" stroke="#dd9480" stroke-width="10" />
            <path d="M20 1010Q20 1060 50 1100T130 1165" fill="none" stroke="#bcd0a0" stroke-width="8" />
            <path class="primary-case" d="M260 -10L110 380L40 540Q10 620 20 760L45 1230" />
            <path class="primary" d="M260 -10L110 380L40 540Q10 620 20 760L45 1230" />
          </svg>

          <!-- run track -->
          <path class="track" d="M753 784L747 784L754 765L729 751L712 747L713 727L679 717L663 708L633 707L617 690L598 679L570 667L552 660L540 665L532 673L531 682L525 687L525 700L528 727L524 743L509 780L478 842L473 845L464 870L455 880L436 923L405 970L376 1005L372 1020L372 1033L383 1057L395 1065L421 1072L450 1068L495 1055L529 1045L557 1040L577 1047L588 1032L593 1009L617 1007L625 998L650 986L659 957L653 940L654 933L668 905L688 897L690 882L710 851L719 850L724 838L736 835L749 807L749 792" />

          <g class="street">
            <text x="104" y="504">Krásnopolská</text>
            <text x="243" y="506">Krásnopolská</text>
            <text x="363" y="509" transform="rotate(3 363 509)">Krásnopolská</text>
            <text x="423" y="537" transform="rotate(76 423 537)">Technologický</text>
            <text x="546" y="483" transform="rotate(-10 546 483)">Stará</text>
            <text x="527" y="502" transform="rotate(-28 527 502)">Pustkovecká</text>
            <text x="562" y="561" transform="rotate(47 562 561)">Marty Krásové</text>
            <text x="455" y="632" transform="rotate(44 455 632)">Studentská</text>
            <text x="517" y="741" transform="rotate(-75 517 741)">Studentská</text>
            <text x="510" y="857" transform="rotate(20 510 857)">Dr. Slabihoudka</text>
            <text x="658" y="489">Hrázka</text>
            <text x="743" y="523" transform="rotate(70 743 523)">Pustkovecká</text>
            <text x="585" y="533" transform="rotate(42 585 533)">Pavlouskova</text>
            <text x="1008" y="488" transform="rotate(-85 1008 488)">Héve</text>
            <text x="965" y="520" transform="rotate(-3 965 520)">Karla Aksamita</text>
            <text x="952" y="552" transform="rotate(9 952 552)">Pustkovecká</text>
            <text x="846" y="579" transform="rotate(18 846 579)">Slavíkova</text>
            <text x="868" y="616" transform="rotate(-88 868 616)">Slavíkova</text>
            <text x="664" y="610" transform="rotate(-16 664 610)">Slavíkova</text>
            <text x="955" y="671" transform="rotate(-12 955 671)">Slavíkova</text>
            <text x="770" y="673" transform="rotate(33 770 673)">Finanční</text>
            <text x="1039" y="609" transform="rotate(-13 1039 609)">Karla Pokorného</text>
            <text x="1078" y="628" transform="rotate(-38 1078 628)">Žilinská</text>
            <text x="979" y="632" transform="rotate(87 979 632)">Ježkova</text>
            <text x="1046" y="662">Sokolovská</text>
            <text x="1029" y="685" transform="rotate(88 1029 685)">Kyjevská</text>
            <text x="1069" y="697" transform="rotate(88 1069 697)">náměstí Družby</text>
            <text x="1074" y="739" transform="rotate(18 1074 739)">Gen. Soch</text>
            <text x="1041" y="770" transform="rotate(18 1041 770)">U Sportoviště</text>
            <text x="934" y="735" transform="rotate(-65 934 735)">U Vozovny</text>
            <text x="949" y="760" transform="rotate(-70 949 760)">Sokolovská</text>
            <text x="989" y="775" transform="rotate(-72 989 775)">Jaselská</text>
            <text x="772" y="766" transform="rotate(-73 772 766)">Havanská</text>
            <text x="716" y="798" transform="rotate(-70 716 798)">Dvorní</text>
            <text x="840" y="848" transform="rotate(-75 840 848)">Bohuslava Martinů</text>
            <text x="897" y="834" transform="rotate(22 897 834)">Pionýrů</text>
            <text x="922" y="831" transform="rotate(-70 922 831)">Porubská</text>
            <text x="956" y="875" transform="rotate(15 956 875)">Španielova</text>
            <text x="346" y="906" transform="rotate(18 346 906)">Drobná</text>
            <text x="362" y="936" transform="rotate(-72 362 936)">Turistická</text>
            <text x="317" y="967" transform="rotate(-80 317 967)">Výletní</text>
            <text x="385" y="986" transform="rotate(-57 385 986)">K Myslivně</text>
            <text x="347" y="1023" transform="rotate(-87 347 1023)">V Zahradách</text>
            <text x="238" y="1013">Rekreační</text>
            <text x="407" y="1084" transform="rotate(18 407 1084)">Pod Nemocnicí</text>
            <text x="405" y="1126" transform="rotate(22 405 1126)">V Zahradách</text>
            <text x="514" y="1117" transform="rotate(-85 514 1117)">Loučky</text>
            <text x="226" y="1169" transform="rotate(-62 226 1169)">Ke Skalce</text>
            <text x="264" y="1161" transform="rotate(-58 264 1161)">Višňová</text>
            <text x="337" y="1183" transform="rotate(35 337 1183)">Záhumenní</text>
            <text x="493" y="1233" transform="rotate(-16 493 1233)">Záhumenní</text>
            <text x="703" y="889" transform="rotate(22 703 889)">Hlavní třída</text>
            <text x="810" y="932" transform="rotate(22 810 932)">Hlavní třída</text>
            <text x="1012" y="1012" transform="rotate(22 1012 1012)">Hlavní třída</text>
            <text x="743" y="954" transform="rotate(-72 743 954)">Alšova</text>
            <text x="796" y="955" transform="rotate(-70 796 955)">Čs. exilu</text>
            <text x="759" y="1051" transform="rotate(-72 759 1051)">Čs. exilu</text>
            <text x="731" y="992" transform="rotate(22 731 992)">Matěje Kopeckého</text>
            <text x="941" y="939" transform="rotate(-75 941 939)">Spojů</text>
            <text x="994" y="908" transform="rotate(-72 994 908)">Dětská</text>
            <text x="1015" y="942" transform="rotate(19 1015 942)">Čkalovova</text>
            <text x="1073" y="912" transform="rotate(22 1073 912)">Španielova</text>
            <text x="895" y="1018" transform="rotate(-12 895 1018)">Dělnická</text>
            <text x="922" y="1110" transform="rotate(77 922 1110)">Dělnická</text>
            <text x="859" y="1064" transform="rotate(80 859 1064)">Porubská</text>
            <text x="835" y="1078" transform="rotate(80 835 1078)">Gustava Klimenta</text>
            <text x="814" y="1080" transform="rotate(-68 814 1080)">Urxova</text>
            <text x="995" y="1076" transform="rotate(-10 995 1076)">Resslova</text>
            <text x="976" y="1108" transform="rotate(80 976 1108)">Skautská</text>
            <text x="1065" y="1117" transform="rotate(-84 1065 1117)">Ľudovíta Štúra</text>
            <text x="1080" y="1097" transform="rotate(15 1080 1097)">Větrná</text>
            <text x="1077" y="1151">Příčná</text>
            <text x="786" y="1111" transform="rotate(20 786 1111)">Budovatelská</text>
            <text x="589" y="1093" transform="rotate(-82 589 1093)">V Zahradách</text>
            <text x="698" y="1126" transform="rotate(-76 698 1126)">Klimkovická</text>
            <text x="632" y="1167" transform="rotate(-8 632 1167)">Splavní</text>
            <text x="625" y="1192" transform="rotate(-5 625 1192)">Vřesinská</text>
            <text x="764" y="1165" transform="rotate(22 764 1165)">Vřesinská</text>
            <text x="868" y="1203" transform="rotate(11 868 1203)">Nad Porubkou</text>
            <text x="1028" y="1229" transform="rotate(18 1028 1229)">Nad Porubkou</text>
            <text x="629" y="1225" transform="rotate(16 629 1225)">Záhumenní</text>
            <text x="666" y="1233" transform="rotate(-52 666 1233)">Klimkovická</text>
          </g>
          <g class="street large">
            <text x="509" y="545" transform="rotate(43 509 545)">Opavská</text>
            <text x="582" y="614" transform="rotate(43 582 614)">Opavská</text>
            <text x="823" y="758" transform="rotate(20 823 758)">Opavská</text>
            <text x="1073" y="858" transform="rotate(20 1073 858)">Opavská</text>
            <text x="766" y="512" transform="rotate(88 766 512)">17. listopadu</text>
            <text x="734" y="659" transform="rotate(-69 734 659)">17. listopadu</text>
            <text x="664" y="837" transform="rotate(-68 664 837)">17. listopadu</text>
            <text x="605" y="978" transform="rotate(-70 605 978)">17. listopadu</text>
            <text x="566" y="1164" transform="rotate(88 566 1164)">17. listopadu</text>
            <text x="885" y="491" transform="rotate(38 885 491)">Koderna</text>
            <text x="308" y="1144" transform="rotate(6 308 1144)">Vřesinská</text>
            <text x="871" y="687">Poruba</text>
            <text x="871" y="703">Vozovna</text>
            <text x="125" y="1023">koupaliště</text>
            <text x="966" y="1236">Průmyslová</text>
          </g>
          <g class="street large hospital-label">
            <text x="498" y="948">Fakultní</text>
            <text x="498" y="964">nemocnice</text>
            <text x="498" y="980">Ostrava</text>
            <text x="502" y="1012">Porubský</text>
            <text x="502" y="1028">les</text>
          </g>
          <g class="street large park-label">
            <text x="788" y="821">Havlíčkovo</text>
            <text x="788" y="837">náměstí</text>
          </g>
          <g class="district">
            <text x="186" y="772">Porubský</text>
            <text x="185" y="791">les</text>
            <text x="953" y="507">Poruba-sever</text>
            <text x="884" y="864" class="small">PORUBA</text>
            <text x="745" y="1184">Poruba</text>
          </g>
        </svg>
        <p class="attribution">© OpenStreetMap Contributors</p>
      </section>

      <section class="card">
        <div class="workout">
          <svg class="sport" viewBox="0 0 120 120">
            <circle cx="60" cy="60" r="60" fill="#98c27c" />
            <g fill="none" stroke="#fff" stroke-width="5.500" stroke-linecap="round" stroke-linejoin="round">
              <circle cx="75" cy="36.500" r="5.300" fill="#fff" stroke="none" />
              <path d="M48.500 52.500L56.500 43H68L78.500 53.500L87.500 44.500" />
              <path d="M59 59L48 68H32.500M60 58L70 67L65 86" />
              <path d="M65 45L70 47L60 58" fill="#fff" stroke-width="8" />
            </g>
          </svg>
          <div class="workout-text">
            <h2 class="sport-name">BĚH</h2>
            <time class="date" datetime="2020-10-21T17:35">21. října 2020 17:35</time>
          </div>
        </div>
        <div class="record">
          <svg class="sparkles" viewBox="0 0 92 74" fill="#a76f34">
            <path d="M4 6Q12 10 20 6Q16 15 20 24Q12 20 4 24Q8 15 4 6Z" fill="none" stroke="#a76f34" stroke-width="3" />
            <path d="M98 12Q99 22 108 24Q99 26 98 36Q97 26 88 24Q97 22 98 12Z" />
            <circle cx="44" cy="71" r="5.500" /><circle cx="112" cy="61" r="3.300" />
          </svg>
          <div class="record-text">
            <strong>3 KM - 24:24</strong>
            <span>NEJLEPŠÍ V ŘÍJNU &nbsp;|&nbsp; 0:01 ZLEPŠENÍ</span>
          </div>
          <svg class="sparkles" viewBox="0 0 92 74" fill="#a76f34">
            <path d="M-50 8Q-44 11 -38 8Q-41 15 -38 22Q-44 19 -50 22Q-47 15 -50 8Z" fill="none" stroke="#a76f34" stroke-width="3" />
            <circle cx="69" cy="5" r="3.300" /><circle cx="19" cy="45" r="6" />
            <path d="M81 56Q82 65 90 66Q82 67 81 76Q80 67 72 66Q80 65 81 56Z" fill="none" stroke="#a76f34" stroke-width="2.500" />
          </svg>
        </div>
      </section>

      <h2 class="section-title">Přehled</h2>

      <dl class="stats card">
        <div class="stat">
          <svg viewBox="0 0 90 90" fill="none" stroke-width="4" stroke-linecap="round">
            <path d="M32.500 55L24.500 63.500C16 54 2.500 39 2.500 26.500A22.500 22.500 0 0 1 46 19M36 25.500A12 12 0 1 0 30.500 36.500" stroke="#9d6cb3" />
            <path d="M61 86.500C52 77 36 61 36 46A25 25 0 0 1 86 46C86 61 70 77 61 86.500Z" stroke="#782f95" />
            <circle cx="61" cy="45.500" r="12.500" stroke="#782f95" />
          </svg>
          <dt>VZDÁLENOST</dt>
          <dd><b>3.81</b> km</dd>
        </div>
        <div class="stat">
          <svg viewBox="0 0 90 90" fill="none" stroke="#4159a9" stroke-width="3.800">
            <path d="M42 15.500V11H36.500V5.500H53.500V11H48.500V15.500A36 36 0 0 1 66 22L70.500 17L78.500 24.500L73.500 29A36.500 36.500 0 1 1 42 15.500" />
            <path d="M45 41V51" stroke-width="2.500" />
            <circle cx="45" cy="51.500" r="4.800" fill="#4159a9" stroke="none" />
          </svg>
          <dt>TRVÁNÍ</dt>
          <dd><b>30:59</b></dd>
        </div>
        <div class="stat pace">
          <svg viewBox="0 0 90 90"><use href="#gauge" /><path d="M44.700 41V52" stroke="currentColor" stroke-width="5" /></svg>
          <dt>PRŮM. TEMPO</dt>
          <dd><b>8:08</b> min/km</dd>
        </div>
        <div class="stat pace">
          <svg viewBox="0 0 90 90"><use href="#gauge" /><path d="M44.700 52L53.500 61" stroke="currentColor" stroke-width="5" /></svg>
          <dt>MAX. TEMPO</dt>
          <dd><b>2:27</b> min/km</dd>
        </div>
        <div class="stat speed">
          <svg viewBox="0 0 90 90"><use href="#gauge" /><path d="M44.700 41V52" stroke="currentColor" stroke-width="5" /></svg>
          <dt>PRŮM. RYCHLOST</dt>
          <dd><b>7.4</b> km/h</dd>
        </div>
        <div class="stat speed">
          <svg viewBox="0 0 90 90"><use href="#gauge" /><path d="M44.700 52L53.500 61" stroke="currentColor" stroke-width="5" /></svg>
          <dt>MAX. RYCHLOST</dt>
          <dd><b>24.5</b> km/h</dd>
        </div>
        <div class="stat">
          <svg viewBox="0 0 90 90" fill="none" stroke="#e99c3d" stroke-width="3.800" stroke-linejoin="round">
            <path d="M46 3C57 18 54 33 40 33.500C29 33 27 23 33.500 12C24 19 24 28 22.500 34C22 40 20 42 17.500 41C14 40 15 33 18.500 26.500C12 34 11.500 44 11.500 49C11.500 69 27 83 45.500 83C64 83 79 69 79 49C79 40 77 34 73.500 28C75 35 72 37 69 35C64 32 65 27 60 21C56 15 50 11 46 3Z" />
            <path d="M46 47C37 50 33 56 33 61C33 69 38 74 46 74C54 74 60 69 60 62C60 59 60 57 58 56C56 59 53 60 51 58C47 56 46 52 46 47Z" />
          </svg>
          <dt>KALORIE</dt>
          <dd><b>267</b> kcal</dd>
        </div>
        <div class="stat">
          <svg viewBox="0 0 90 90" fill="none" stroke-width="3.800" stroke-linecap="round">
            <path d="M46.500 29C40 20 33 13 26 5.500C19 14 2.500 29 2.500 42.500A22.500 22.500 0 0 0 31 65" stroke="#82aaf7" />
            <path d="M62 21C55 30 37 46 37 60.500A25 25 0 0 0 87 60.500C87 46 69 30 62 21Z" stroke="#4d85f0" />
          </svg>
          <dt>HYDRATACE</dt>
          <dd><b>0.15</b> litry</dd>
        </div>
        <div class="stat">
          <svg viewBox="0 0 90 90" fill="none" stroke="#8f97d0" stroke-width="4">
            <path d="M4 76L26 22L42 48L58 22L84 76Z" />
          </svg>
          <dt>MIN. NAD. VÝŠKA</dt>
        </div>
        <div class="stat">
          <svg viewBox="0 0 90 90" fill="none" stroke-width="4">
            <path d="M4 76L26 22L36 36" stroke="#8f97d0" />
            <path d="M32 76L59 10L86 76Z" stroke="#403d97" />
          </svg>
          <dt>MAX. NAD. VÝŠKA</dt>
        </div>
      </dl>
    </main>
    <div class="home-indicator"></div>
  </div>
</body>

</html>
```
FILE: styles.css
```css
* {
  box-sizing: border-box;
}

body {
  margin: 0;
  background-color: #eff0f3;
  color: #22262a;
  font-family: Roboto, "Liberation Sans", sans-serif;
}

h1,
h2,
p,
dl,
dd {
  margin: 0;
}

button {
  border: 0;
  padding: 0;
  background: none;
  font-family: inherit;
  cursor: pointer;
}

.defs {
  display: none;
}

.app {
  position: relative;
  display: flex;
  flex-direction: column;
  height: 100vh;
  overflow: hidden;
}

/* header */
.header {
  flex: none;
  background: linear-gradient(#7aca40, #479a43);
  border-bottom: 1px solid #9fa5a0;
  color: #fff;
}

.status-bar {
  display: flex;
  align-items: center;
  height: 132px;
  padding: 6px 42px 0 60px;
}

.time {
  font-family: Inter, sans-serif;
  font-size: 46px;
  font-weight: 500;
}

.location {
  width: 32px;
  height: 32px;
  margin-left: 10px;
  margin-right: auto;
}

.signal {
  width: 52px;
  height: 34px;
}

.wifi {
  width: 46px;
  height: 34px;
  margin: 0 14px;
}

.battery {
  width: 74px;
  height: 36px;
}

.nav {
  display: grid;
  grid-template-columns: 100px 1fr 100px;
  align-items: center;
  height: 132px;
  padding: 0 48px 2px 27px;
}

.nav h1 {
  padding-left: 21px;
  font-size: 62px;
  font-weight: 500;
  line-height: 72px;
  text-align: center;
}

.nav-button {
  display: flex;
}

.nav-button svg {
  width: 36px;
  height: 64px;
}

.more {
  justify-content: flex-end;
}

.more svg {
  width: 72px;
  height: 18px;
}

/* page */
.content {
  flex: 1;
  min-height: 0;
  padding: 29px 30px 0;
  overflow-y: auto;
  scrollbar-width: none;
}

.card {
  background-color: #fff;
  box-shadow: 0 2px 8px rgba(0, 0, 0, 0.1);
}

/* banner */
.banner {
  position: relative;
  display: flex;
  align-items: center;
  max-width: 960px;
  height: 150px;
  margin: 0 auto 30px;
  padding: 0 30px;
  background: linear-gradient(#475a98, #574396);
}

.banner-art {
  position: absolute;
  inset: 0;
  width: 100%;
  height: 100%;
}

.banner-logo {
  position: relative;
  width: 92px;
  height: 104px;
}

.banner-text {
  position: relative;
  margin-left: 31px;
  color: #fff;
  font-size: 41px;
  font-weight: 700;
}

.premium {
  position: relative;
  width: 276px;
  height: 90px;
  margin-left: auto;
  border-radius: 6px;
  background-color: #82be3b;
  color: #fff;
  font-size: 37px;
  font-weight: 500;
}

/* map */
.map {
  position: relative;
  margin-bottom: 30px;
}

.map-canvas {
  display: block;
  width: 100%;
}

.attribution {
  position: absolute;
  right: 0;
  bottom: 0;
  padding-left: 2px;
  background-color: rgba(255, 255, 255, 0.75);
  color: #444;
  font-family: "DejaVu Sans", sans-serif;
  font-size: 24px;
  line-height: 28px;
}

.field { fill: #fcfae8; }
.town { fill: #f5f3e1; }
.forest { fill: #c8d7b0; }
.meadow { fill: #e6f0c6; }
.meadow-bright,
.park { fill: #dceec5; }
.campus { fill: #fdf1ce; }
.hospital { fill: #dec6c2; }
.industry { fill: #efeedd; }
.pitch { fill: #c0e3bb; }
.building { fill: #e1dedb; }
.lot { fill: #e9e8e8; }

.water,
.path,
.road,
.rail,
.house,
.block,
.terrace,
.tracks,
.power,
.estate,
.roundabout,
.median,
.primary,
.primary-case,
.secondary,
.secondary-case,
.track {
  fill: none;
  stroke-linejoin: round;
}

.water { stroke: #c9dddb; stroke-width: 4; }
.path { stroke: #e4dfd1; stroke-width: 7; }
.path.light { stroke: #eeead3; stroke-width: 6; }
.road { stroke: #fff; stroke-width: 11; }
.road.thin { stroke-width: 9; }
.estate { stroke: #fff; stroke-width: 4; }
.roundabout { fill: #fcfae8; stroke: #fff; stroke-width: 9; }
.rail { stroke: #b3b0a6; stroke-width: 4; stroke-dasharray: 3 3; }
.tracks { stroke: #bab8ab; stroke-width: 56; stroke-dasharray: 3 4; }
.power { stroke: #fff; stroke-width: 3; stroke-dasharray: 8 6; }
.median { stroke: #9c8a64; stroke-width: 2; }
.house { stroke: #e1dedb; stroke-width: 17; stroke-dasharray: 16 14; }
.block { stroke: #e1dedb; stroke-width: 19; }
.terrace { stroke: #e1dedb; stroke-width: 28; stroke-dasharray: 22 6; }
.primary-case { stroke: #e9bf76; stroke-width: 30; }
.primary { stroke: #f5d592; stroke-width: 24; }
.secondary-case { stroke: #eed987; stroke-width: 25; }
.secondary { stroke: #fbeea9; stroke-width: 20; }

.track {
  stroke: #669df6;
  stroke-width: 6;
}

.street,
.district {
  fill: #666;
  stroke: #fff;
  stroke-opacity: 0.7;
  stroke-width: 2;
  paint-order: stroke;
  font-family: "Noto Sans", sans-serif;
  font-size: 9px;
  text-anchor: middle;
  dominant-baseline: central;
}

.street.large {
  font-size: 11px;
}

.hospital-label {
  fill: #806c6c;
}

.park-label {
  fill: #83997a;
  font-style: italic;
}

.district {
  fill: #8c8c8c;
  stroke-opacity: 1;
  stroke-width: 3;
  font-size: 14px;
  font-weight: 500;
}

.district .small {
  font-size: 12px;
}

/* workout */
.workout {
  display: flex;
  gap: 31px;
  padding: 30px;
}

.sport {
  width: 120px;
  height: 120px;
}

.workout-text {
  padding-top: 2px;
}

.sport-name {
  font-size: 40px;
  font-weight: 700;
  line-height: 52px;
}

.date {
  font-size: 43px;
  line-height: 52px;
}

.record {
  display: flex;
  justify-content: space-between;
  padding: 30px 30px 34px;
  background-color: #c28242;
  color: #fff;
}

.sparkles {
  width: 92px;
  height: 74px;
  overflow: visible;
}

.record-text {
  display: flex;
  flex-direction: column;
  align-items: center;
  margin: -4px 0 -16px;
}

.record-text strong {
  font-size: 45px;
  font-weight: 500;
  line-height: 50px;
}

.record-text span {
  font-size: 37px;
  line-height: 44px;
}

.section-title {
  padding: 50px 30px 33px;
  font-size: 44px;
  font-weight: 500;
  line-height: 52px;
}

/* stats */
.stats {
  display: grid;
  grid-template-columns: 1fr 1fr;
  padding: 56px 0 56px 30px;
}

.stat {
  display: grid;
  grid-template-columns: 90px 1fr;
  grid-template-rows: 40px 80px;
  column-gap: 30px;
  height: 150px;
}

.stat svg {
  grid-row: 1 / 3;
  width: 90px;
  height: 90px;
  margin-top: 4px;
}

.stat dt {
  color: #9498a3;
  font-size: 34px;
  font-weight: 500;
  line-height: 40px;
}

.stat dd {
  color: #000;
  font-size: 40px;
  line-height: 80px;
}

.stat b {
  margin-right: 6px;
  font-size: 57px;
}

.pace {
  color: #459f60;
}

.speed {
  color: #c64536;
}

.home-indicator {
  position: absolute;
  bottom: 24px;
  left: 50%;
  width: 402px;
  height: 15px;
  border-radius: 8px;
  background-color: #000;
  transform: translateX(-50%);
}
```
